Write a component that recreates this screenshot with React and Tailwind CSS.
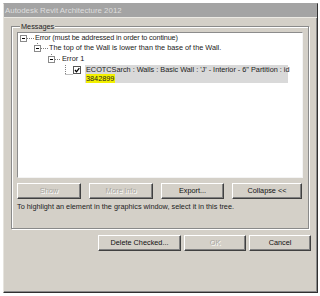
import React from "react";

// classic win dialog button
function Btn({ children, disabled, className }) {
  return (
    <div
      className={`
      ${className}
      h-[16px]
      flex
      items-center
      justify-center
      border
      border-t-white
      border-l-white
      border-r-[#404040]
      border-b-[#404040]
      shadow-[inset_-1px_-1px_0_#808080]
      text-[7.3px]
      leading-none
      ${
        disabled
          ? "text-[#a8a6a0] [text-shadow:1px_1px_0_#ffffff]"
          : "text-[#111]"
      }
      `}
    >
      {children}
    </div>
  );
}

function Expander({ x }) {
  return (
    <g>
      <rect x={x + 0.5} y="2.5" width="6" height="6" fill="#fff" stroke="#8a8a8a" />
      <line x1={x + 2} y1="5.5" x2={x + 5} y2="5.5" stroke="#000" />
    </g>
  );
}

function Tree() {
  return (
    <div
      className="
      w-[286px]
      h-[146px]
      bg-white
      border
      border-t-[#8c8c8c]
      border-l-[#8c8c8c]
      border-r-[#f4f4f4]
      border-b-[#f4f4f4]
      text-[7.3px]
      text-[#222]
      "
    >
      {/* row 1 */}
      <div className="h-[10px] flex items-center">
        <svg width="17" height="10" className="shrink-0">
          <line x1="9" y1="5.5" x2="16" y2="5.5" stroke="#808080" strokeDasharray="1 1" />
          <Expander x={2} />
        </svg>
        <span className="tracking-[-0.15px]">Error (must be addressed in order to continue)</span>
      </div>

      {/* row 2 */}
      <div className="h-[11px] flex items-center">
        <svg width="31" height="11" className="shrink-0">
          <line x1="19.5" y1="0" x2="19.5" y2="3" stroke="#808080" strokeDasharray="1 1" />
          <line x1="23" y1="5.5" x2="30" y2="5.5" stroke="#808080" strokeDasharray="1 1" />
          <Expander x={16} />
        </svg>
        <span>The top of the Wall is lower than the base of the Wall.</span>
      </div>

      {/* row 3 */}
      <div className="h-[11px] flex items-center">
        <svg width="44" height="11" className="shrink-0">
          <line x1="33.5" y1="0" x2="33.5" y2="3" stroke="#808080" strokeDasharray="1 1" />
          <line x1="37" y1="5.5" x2="43" y2="5.5" stroke="#808080" strokeDasharray="1 1" />
          <Expander x={30} />
        </svg>
        <span>Error 1</span>
      </div>

      {/* row 4 - selected */}
      <div className="h-[18px] flex">
        <svg width="67" height="18" className="shrink-0">
          <line x1="47.5" y1="0" x2="47.5" y2="9.5" stroke="#808080" strokeDasharray="1 1" />
          <line x1="47.5" y1="9.5" x2="55" y2="9.5" stroke="#808080" strokeDasharray="1 1" />
          <rect x="55.5" y="1.5" width="7" height="7" fill="#fff" stroke="#555" />
          <path d="M57 5 L58.5 6.8 L61.3 3.2" fill="none" stroke="#000" strokeWidth="1.3" />
        </svg>
        <div
          className="
          w-[203px]
          h-[18px]
          bg-[#d9d9d9]
          leading-[9px]
          pl-[1px]
          "
        >
          <div className="whitespace-nowrap">
            ECOTCSarch : Walls : Basic Wall : 'J' - Interior - 6" Partition : id
          </div>
          <div>
            <span className="bg-[#f2f000] pr-[1px]">3842899</span>
          </div>
        </div>
      </div>
    </div>
  );
}

export default function App() {
  return (
    <div
      className="
      w-[320px]
      h-[296px]
      bg-white
      pt-[3px]
      pl-[3px]
      font-['Liberation_Sans',Arial,sans-serif]
      "
    >
      <div
        className="
        w-[315px]
        h-[290px]
        bg-[#d4d0c8]
        border
        border-t-[#a4a4a4]
        border-l-[#e6e4de]
        border-r-[#303030]
        border-b-[#303030]
        shadow-[inset_-1px_-1px_0_#8a8a8a]
        flex
        flex-col
        "
      >
        {/* title bar */}
        <div
          className="
          h-[14px]
          bg-[#a4a4a4]
          border-b
          border-[#eceae4]
          text-[#dedede]
          text-[7.9px]
          pl-[1px]
          flex
          items-center
          "
        >
          Autodesk Revit Architecture 2012
        </div>

        <fieldset
          className="
          ml-[7px]
          mt-[4px]
          w-[297px]
          h-[207px]
          border
          border-[#8a8a8a]
          shadow-[inset_1px_1px_0_#ffffff,1px_1px_0_#ffffff]
          px-[5px]
          "
        >
          <legend
            className="
            ml-[3px]
            px-[1px]
            bg-[#d4d0c8]
            text-[7.3px]
            leading-[9px]
            text-[#222]
            "
          >
            Messages
          </legend>

          <div className="mt-[1px]">
            <Tree />
          </div>

          <div className="mt-[5px] flex gap-[8px]">
            <Btn disabled className="w-[64px]">Show</Btn>
            <Btn disabled className="w-[64px]">More Info</Btn>
            <Btn className="w-[63px]">Export...</Btn>
            <Btn className="w-[70px]">Collapse &lt;&lt;</Btn>
          </div>

          <p
            className="
            mt-[4px]
            text-[7.3px]
            leading-[8px]
            text-[#222]
            "
          >
            To highlight an element in the graphics window, select it in this tree.
          </p>
        </fieldset>

        <div className="mt-[6px] pr-[6px] flex justify-end gap-[3px]">
          <Btn className="w-[83px]">Delete Checked...</Btn>
          <Btn disabled className="w-[62px]">OK</Btn>
          <Btn className="w-[62px]">Cancel</Btn>
        </div>
      </div>
    </div>
  );
}
